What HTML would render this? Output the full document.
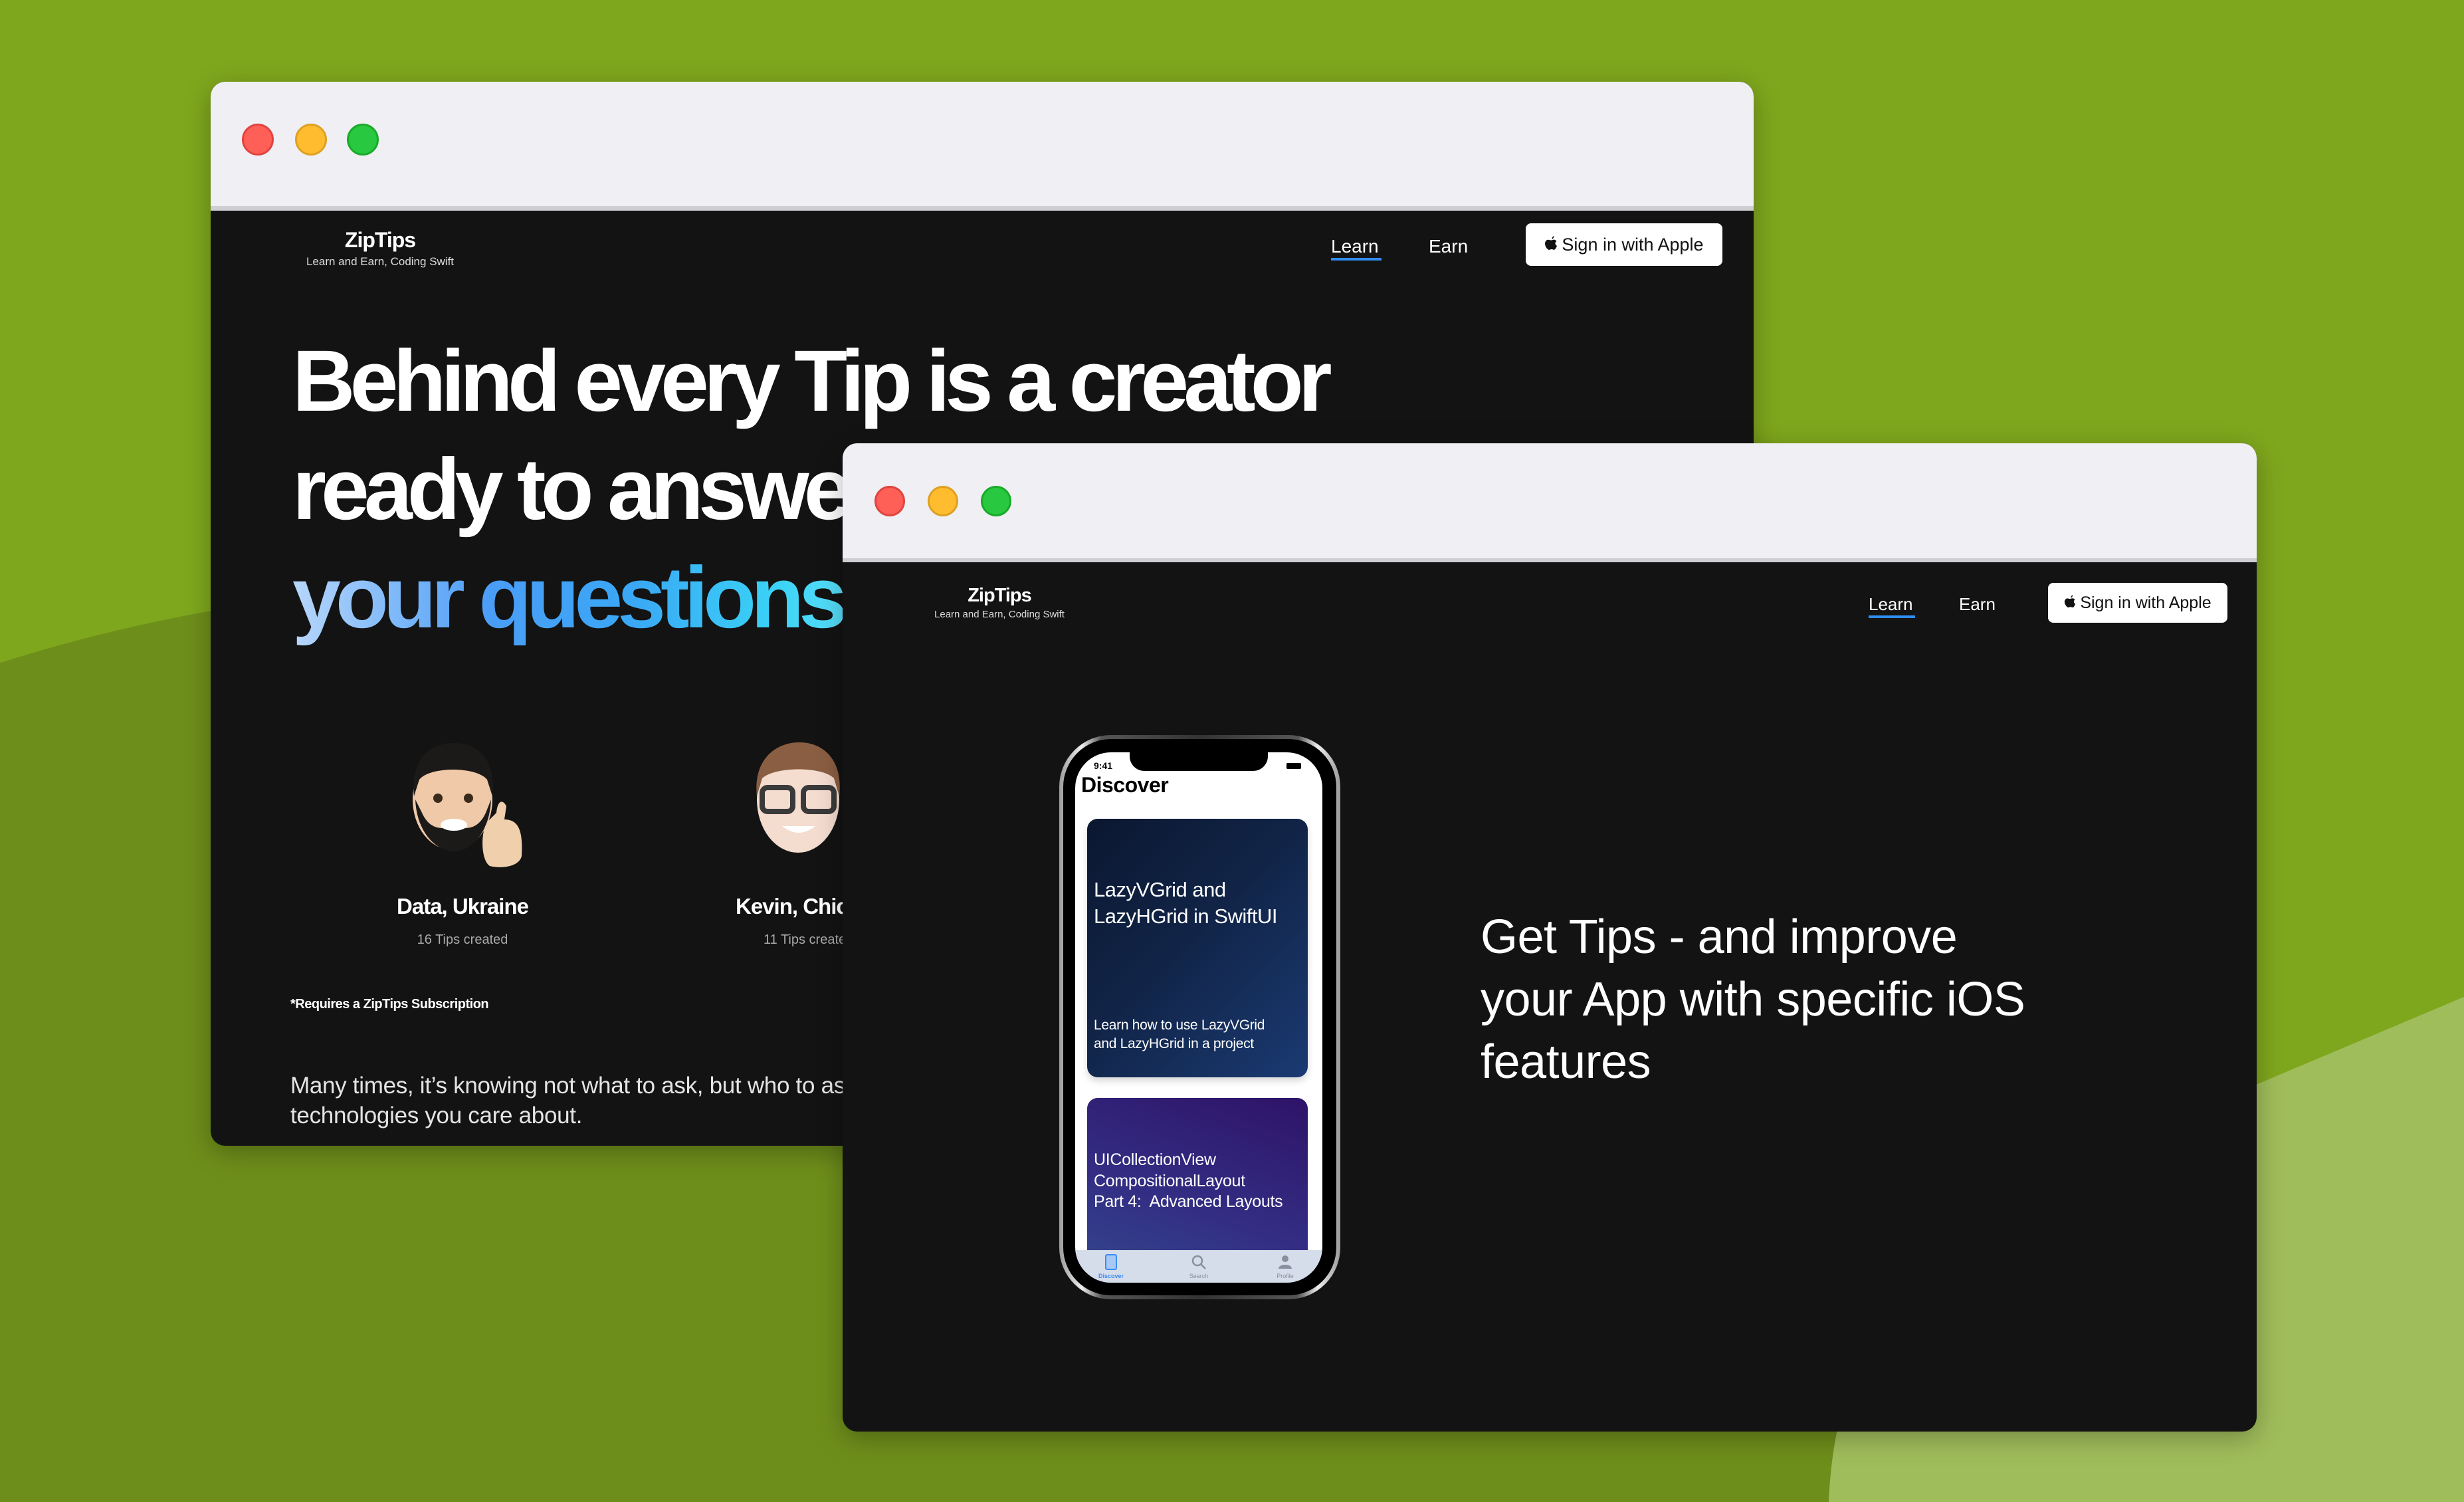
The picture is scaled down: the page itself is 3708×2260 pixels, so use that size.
<!DOCTYPE html>
<html><head><meta charset="utf-8"><style>
*{margin:0;padding:0;box-sizing:border-box}
html,body{width:3708px;height:2260px;overflow:hidden;background:#7fa71d;font-family:"Liberation Sans",sans-serif}
.abs{position:absolute}
.win{position:absolute;overflow:hidden;background:#131313;border-radius:22px;box-shadow:0 10px 40px rgba(0,0,0,.28)}
.tb{position:absolute;left:0;top:0;width:100%;background:#efeff4}
.dot{position:absolute;border-radius:50%}
.r{background:#fe5f57;border:3px solid #e0443e}.y{background:#febc2e;border:3px solid #dea123}.g{background:#28c840;border:3px solid #1aab29}
.t{position:absolute;white-space:nowrap;color:#fff}
.btn{position:absolute;background:#fff;border-radius:8px;color:#111;text-align:center;white-space:nowrap}
.btn svg{vertical-align:-2px;margin-right:6px}
.ul{position:absolute;height:4px;background:#2f8cf0}
</style></head><body>
<svg class="abs" style="left:0;top:0" width="3708" height="2260" viewBox="0 0 3708 2260">
<circle cx="760" cy="3400" r="2520" fill="#6e8e1b"/>
<path d="M2752 2260 C2765 1950 2950 1780 3400 1630 L3708 1500 V2260 Z" fill="#a0bd5b"/>
</svg>

<!-- back window -->
<div class="win" style="left:317px;top:123px;width:2322px;height:1601px">
 <div class="tb" style="height:194px;border-bottom:7px solid #cfcfd3"></div>
 <div class="dot r" style="left:47px;top:63px;width:48px;height:48px"></div>
 <div class="dot y" style="left:127px;top:63px;width:48px;height:48px"></div>
 <div class="dot g" style="left:205px;top:63px;width:48px;height:48px"></div>
 <div class="t" style="left:55px;width:400px;text-align:center;top:222px;font-size:32px;line-height:32px;font-weight:bold;letter-spacing:-1px">ZipTips</div>
 <div class="t" style="left:55px;width:400px;text-align:center;top:262px;font-size:17px;line-height:17px;color:#ddd">Learn and Earn, Coding Swift</div>
 <div class="t" style="left:1686px;top:234px;font-size:28px;line-height:28px">Learn</div>
 <div class="ul" style="left:1686px;top:265px;width:76px"></div>
 <div class="t" style="left:1833px;top:234px;font-size:28px;line-height:28px">Earn</div>
 <div class="btn" style="left:1979px;top:213px;width:296px;height:64px;line-height:64px;font-size:27px"><svg width="20" height="24" viewBox="0 0 20 24"><path d="M14.5 0 C14.7 2 13.5 4 11.6 4.8 C11.3 3 12.5 0.8 14.5 0 Z M10 6.5 C11.5 6.5 12.8 5.6 14.2 5.6 C16 5.6 17.5 6.6 18.4 8 C15.6 9.6 16 13.6 19 14.8 C18.3 17 16.8 20.6 14.8 20.8 C13.4 21 12.8 20 11 20 C9.2 20 8.5 20.9 7.2 20.9 C5 20.9 1 16 1 11.6 C1 8 3.4 5.7 5.8 5.7 C7.5 5.7 8.6 6.5 10 6.5 Z" fill="#111"/></svg>Sign in with Apple</div>
 <div class="t" style="left:123px;top:368px;font-size:131px;line-height:163px;font-weight:bold;letter-spacing:-8px">Behind every Tip is a creator<br>ready to answer<br><span style="background:linear-gradient(90deg,#b7d6fb 0%,#4a9df7 35%,#3aa8f5 60%,#3ad2f6 85%,#60e2fa 100%);-webkit-background-clip:text;background-clip:text;color:transparent">your questions.</span></div>
 <svg class="abs" style="left:280px;top:980px" width="720" height="220" viewBox="0 0 720 220">
  <ellipse cx="84" cy="100" rx="60" ry="76" fill="#efc9a8"/>
  <path d="M26 95 C20 40 50 15 86 15 C122 15 150 40 144 95 L136 70 C120 50 50 50 34 70 Z" fill="#1c1a19"/>
  <path d="M28 100 C30 150 60 178 86 178 C112 178 140 150 142 100 L134 120 C125 140 110 148 86 140 C62 148 47 140 38 120 Z" fill="#1c1a19"/>
  <ellipse cx="86" cy="138" rx="20" ry="9" fill="#fff"/>
  <circle cx="62" cy="98" r="7" fill="#3a2a1a"/><circle cx="108" cy="98" r="7" fill="#3a2a1a"/>
  <path d="M140 200 C125 190 126 140 140 130 L150 120 C152 100 160 100 165 110 L162 130 C185 130 190 150 188 185 C185 200 160 205 140 200 Z" fill="#f0cfac"/>
  <ellipse cx="604" cy="100" rx="62" ry="80" fill="#f4dccf"/>
  <path d="M542 95 C536 40 570 14 606 14 C642 14 672 40 666 95 L658 68 C640 50 570 50 550 68 Z" fill="#8a5e42"/>
  <rect x="550" y="82" width="46" height="36" rx="8" fill="none" stroke="#3a3a3a" stroke-width="8"/>
  <rect x="612" y="82" width="46" height="36" rx="8" fill="none" stroke="#3a3a3a" stroke-width="8"/>
  <path d="M580 140 Q605 160 630 140 Z" fill="#fff"/>
 </svg>
 <div class="t" style="left:179px;width:400px;text-align:center;top:1224px;font-size:33px;line-height:33px;font-weight:bold;letter-spacing:-1px">Data, Ukraine</div>
 <div class="t" style="left:179px;width:400px;text-align:center;top:1281px;font-size:20px;line-height:21px;color:#aaa">16 Tips created</div>
 <div class="t" style="left:790px;top:1224px;font-size:33px;line-height:33px;font-weight:bold;letter-spacing:-1px">Kevin, Chicago</div>
 <div class="t" style="left:832px;top:1281px;font-size:20px;line-height:21px;color:#aaa">11 Tips created</div>
 <div class="t" style="left:120px;top:1378px;font-size:20px;line-height:21px;font-weight:bold;letter-spacing:-0.5px">*Requires a ZipTips Subscription</div>
 <div class="t" style="left:120px;top:1488px;font-size:35px;line-height:45px;color:#e4e4e4;letter-spacing:-0.3px">Many times, it’s knowing not what to ask, but who to ask about the<br>technologies you care about.</div>
</div>

<!-- front window -->
<div class="win" style="left:1268px;top:667px;width:2128px;height:1487px">
 <div class="tb" style="height:179px;border-bottom:6px solid #cfcfd3"></div>
 <div class="dot r" style="left:48px;top:64px;width:46px;height:46px"></div>
 <div class="dot y" style="left:128px;top:64px;width:46px;height:46px"></div>
 <div class="dot g" style="left:208px;top:64px;width:46px;height:46px"></div>
 <div class="t" style="left:36px;width:400px;text-align:center;top:215px;font-size:29px;line-height:29px;font-weight:bold;letter-spacing:-1px">ZipTips</div>
 <div class="t" style="left:36px;width:400px;text-align:center;top:250px;font-size:15px;line-height:15px;color:#ddd">Learn and Earn, Coding Swift</div>
 <div class="t" style="left:1544px;top:229px;font-size:26px;line-height:26px">Learn</div>
 <div class="ul" style="left:1544px;top:259px;width:70px"></div>
 <div class="t" style="left:1680px;top:229px;font-size:26px;line-height:26px">Earn</div>
 <div class="btn" style="left:1814px;top:210px;width:270px;height:60px;line-height:60px;font-size:25px"><svg width="18" height="22" viewBox="0 0 20 24"><path d="M14.5 0 C14.7 2 13.5 4 11.6 4.8 C11.3 3 12.5 0.8 14.5 0 Z M10 6.5 C11.5 6.5 12.8 5.6 14.2 5.6 C16 5.6 17.5 6.6 18.4 8 C15.6 9.6 16 13.6 19 14.8 C18.3 17 16.8 20.6 14.8 20.8 C13.4 21 12.8 20 11 20 C9.2 20 8.5 20.9 7.2 20.9 C5 20.9 1 16 1 11.6 C1 8 3.4 5.7 5.8 5.7 C7.5 5.7 8.6 6.5 10 6.5 Z" fill="#111"/></svg>Sign in with Apple</div>
 <div class="t" style="left:960px;top:696px;font-size:72px;line-height:94px;letter-spacing:-0.5px">Get Tips - and improve<br>your App with specific iOS<br>features</div>

 <!-- phone -->
 <div class="abs" style="left:326px;top:439px;width:423px;height:849px;border-radius:78px;background:linear-gradient(90deg,#9a9a9a,#eee 8%,#555 15%,#333 50%,#555 85%,#eee 92%,#9a9a9a);padding:6px">
  <div style="width:100%;height:100%;border-radius:72px;background:#000"></div>
 </div>
 <div class="abs" style="left:350px;top:465px;width:372px;height:798px;border-radius:54px;background:#fff;overflow:hidden">
  <div class="abs" style="left:82px;top:0;width:208px;height:28px;background:#000;border-radius:0 0 22px 22px"></div>
  <div class="t" style="left:28px;top:13px;font-size:14px;line-height:14px;font-weight:bold;color:#000">9:41</div>
  <div class="abs" style="left:318px;top:16px;width:22px;height:9px;background:#000;border-radius:2px"></div>
  <div class="t" style="left:9px;top:33px;font-size:32px;line-height:32px;font-weight:bold;color:#000;letter-spacing:-0.5px">Discover</div>
  <div class="abs" style="left:18px;top:100px;width:332px;height:389px;border-radius:16px;background:linear-gradient(135deg,#0b1730 0%,#112447 45%,#1a3a72 100%);box-shadow:0 6px 10px rgba(0,0,0,.15)">
   <div class="t" style="left:10px;top:87px;font-size:31px;line-height:40px;letter-spacing:-0.5px">LazyVGrid and<br>LazyHGrid in SwiftUI</div>
   <div class="t" style="left:10px;top:297px;font-size:21px;line-height:28px;letter-spacing:-0.3px">Learn how to use LazyVGrid<br>and LazyHGrid in a project</div>
  </div>
  <div class="abs" style="left:18px;top:520px;width:332px;height:300px;border-radius:16px;background:linear-gradient(200deg,#2e1368 0%,#332e84 55%,#334b8e 100%)">
   <div class="t" style="left:10px;top:78px;font-size:25px;line-height:31.5px;letter-spacing:-0.3px">UICollectionView<br>CompositionalLayout<br>Part 4:&nbsp; Advanced Layouts</div>
  </div>
  <div class="abs" style="left:0;top:749px;width:372px;height:49px;background:#d5dcea">
   <div class="abs" style="left:45px;top:6px;width:18px;height:24px;border:2px solid #3a8df5;border-radius:3px;background:#a9c8f4"></div>
   <svg class="abs" style="left:174px;top:6px" width="24" height="24"><circle cx="10" cy="10" r="7" fill="none" stroke="#8a8fa0" stroke-width="2.5"/><path d="M15 15 L22 22" stroke="#8a8fa0" stroke-width="2.5"/></svg>
   <svg class="abs" style="left:304px;top:6px" width="24" height="24"><circle cx="12" cy="7" r="5" fill="#8a8fa0"/><path d="M2 22 C2 14 22 14 22 22 Z" fill="#8a8fa0"/></svg>
   <div class="t" style="left:24px;top:34px;width:60px;text-align:center;font-size:9px;color:#3a8df5;font-weight:bold">Discover</div>
   <div class="t" style="left:156px;top:34px;width:60px;text-align:center;font-size:9px;color:#8a8fa0">Search</div>
   <div class="t" style="left:286px;top:34px;width:60px;text-align:center;font-size:9px;color:#8a8fa0">Profile</div>
  </div>
 </div>
</div>
</body></html>
